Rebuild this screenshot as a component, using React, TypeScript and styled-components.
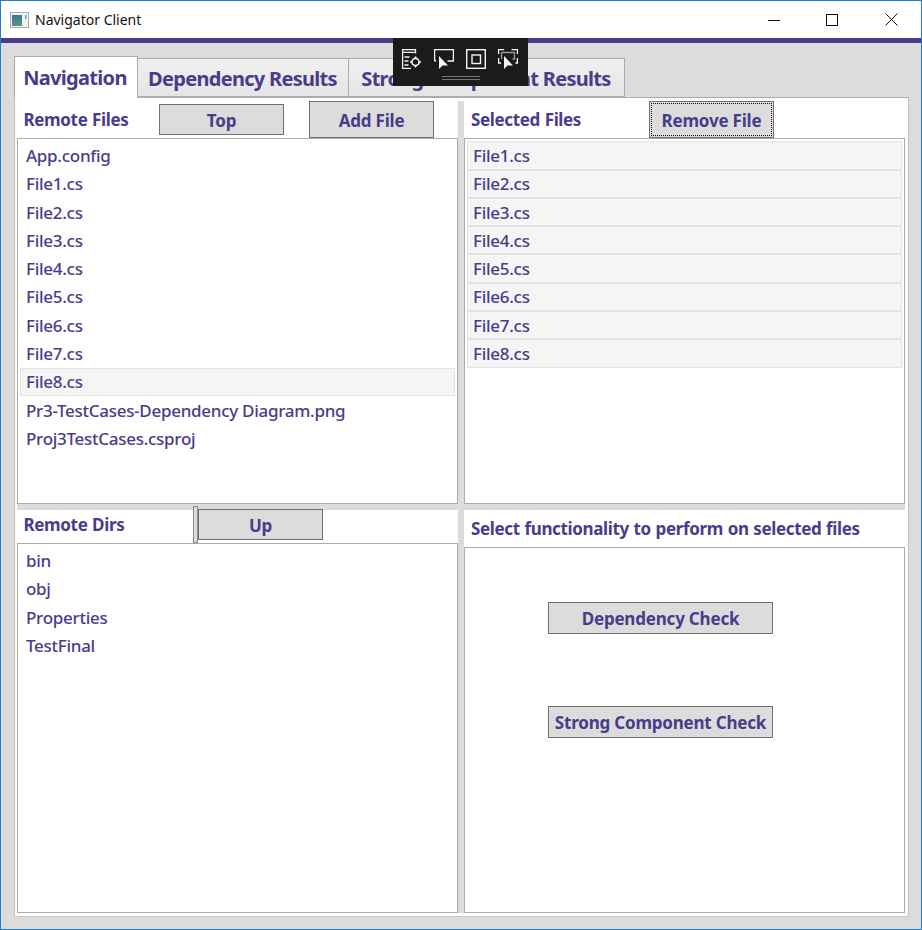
import React from "react";
import styled, { createGlobalStyle } from "styled-components";

const Global = createGlobalStyle`
  html, body { margin: 0; padding: 0; background: #fff; }
  * { box-sizing: border-box; }
`;
const INK = "#483d8b";
const FONT = `"Noto Sans", "Open Sans", "Liberation Sans", sans-serif`;

const Win = styled.div`
  width: 922px; height: 930px; display: flex; flex-direction: column;
  border: 1px solid #1a7fd0; font-family: ${FONT}; position: relative; overflow: hidden;
`;
const TitleBar = styled.div`
  height: 37px; flex: none; display: flex; align-items: center; background: #fff; padding-left: 9px;
`;
const TitleText = styled.div`
  font-family: ${FONT}; font-size: 14px; color: #111; margin-left: 5px; flex: 1; letter-spacing: 0;
`;
const Caption = styled.button<{ $w: number }>`
  width: ${(p) => p.$w}px; height: 37px; border: 0; background: none; padding: 0; display: flex; align-items: center; justify-content: center;
`;
const Accent = styled.div`height: 5px; flex: none; background: ${INK};`;
const Body = styled.div`
  flex: 1; background: #dcdcdc; padding: 13px 12px 12px 13px; display: flex; flex-direction: column;
`;
const TabStrip = styled.div`
  display: flex; align-items: flex-end; height: 41px; flex: none; position: relative; z-index: 1;
`;
const Tab = styled.div<{ $active?: boolean; $w: number }>`
  width: ${(p) => p.$w}px; height: ${(p) => (p.$active ? 42 : 39)}px;
  margin-bottom: ${(p) => (p.$active ? -1 : 0)}px;
  background: ${(p) => (p.$active ? "#fff" : "linear-gradient(#f0f0f0, #e5e5e5)")};
  border: 1px solid #acacac; border-bottom: ${(p) => (p.$active ? "0" : "1px solid #acacac")};
  margin-left: ${(p) => (p.$active ? 0 : -1)}px;
  padding-top: ${(p) => (p.$active ? 0 : 2)}px;
  padding-right: ${(p) => (p.$active ? 2 : 1)}px;
  color: ${INK}; font-weight: 700; font-size: 20px; display: flex; align-items: center; justify-content: center;
  white-space: nowrap; letter-spacing: -0.7px;
`;
const Panel = styled.div`
  flex: 1; border: 1px solid #acacac; border-left-color: #c0c0c0; border-right-color: #c0c0c0; border-bottom-color: #c8c8c8;
  background: #fff; padding: 1px 3px 3px 2px; display: grid;
  grid-template-columns: 441px 6px 441px; grid-template-rows: 405px 6px 1fr; min-height: 0;
`;
const Pane = styled.div`display: flex; flex-direction: column; min-height: 0;`;
const Head = styled.div<{ $h: number; $pt?: number; $pb?: number }>`
  height: ${(p) => p.$h}px; flex: none; display: flex; align-items: center; position: relative;
  padding-top: ${(p) => p.$pt ?? 0}px; padding-bottom: ${(p) => p.$pb ?? 0}px;
`;
const Label = styled.div<{ $w: number; $pl?: number }>`
  width: ${(p) => p.$w}px; flex: none; padding-left: ${(p) => p.$pl ?? 7}px; color: ${INK}; font-weight: 700; font-size: 17px; white-space: nowrap;
  letter-spacing: -0.35px; word-spacing: 0.6px;
`;
const Btn = styled.button<{ $w?: number; $h?: number; $focus?: boolean; $ml?: number; $pt?: number }>`
  width: ${(p) => p.$w ?? 125}px; height: ${(p) => p.$h ?? 31}px; flex: none; margin-left: ${(p) => p.$ml ?? 0}px;
  background: #dcdcdc; border: 1px solid #707070; color: ${INK}; font-family: ${FONT}; font-weight: 700; font-size: 17px;
  letter-spacing: -0.2px; padding: ${(p) => p.$pt ?? 2}px 0 0; position: relative;
  ${(p) => (p.$focus ? `outline: 1px dotted #111; outline-offset: -3px;` : "")}
`;
const List = styled.div`
  flex: 1; border: 1px solid #acacac; background: #fff; padding: 2.3px 2px 2px; min-height: 0;
`;
const Item = styled.div<{ $sel?: boolean }>`
  height: 28.3px; padding-left: 6px; display: flex; align-items: center; font-size: 17px; color: ${INK}; font-weight: 500;
  letter-spacing: -0.28px; white-space: nowrap;
  ${(p) => (p.$sel ? `background: #f5f5f5; border: 1px solid #e3e3e3; padding-left: 5px;` : "")}
`;
const Splitter = styled.div<{ $mt?: number }>`background: #dcdcdc; margin-top: ${(p) => p.$mt ?? 0}px;`;
const HSplit = styled.div`background: #dcdcdc; grid-column: 1 / 4;`;
const Grip = styled.div`
  position: absolute; left: 176px; top: -4px; width: 5px; height: 37px; background: #dcdcdc; border: 1px solid #8c8c8c;
`;
const ActionArea = styled.div`
  flex: 1; border: 1px solid #acacac; background: #fff; display: flex; flex-direction: column; align-items: flex-start;
  padding: 54px 0 0 83px; gap: 72px;
`;
const Toolbar = styled.div`
  position: absolute; left: 392px; top: 37px; width: 135px; height: 48px; background: #1b1b1b; z-index: 5;
  display: flex; align-items: flex-start; gap: 12px; padding: 11px 0 0 9px;
`;
const ToolIcon = styled.svg`width: 20px; height: 20px; flex: none; fill: none; stroke: #f4f4f4; stroke-width: 1.3; overflow: visible;`;
const Handle = styled.div`
  position: absolute; left: 49px; top: 38px; width: 38px; height: 4px; border-top: 1px solid #777; border-bottom: 1px solid #777;
`;

const remote = ["App.config","File1.cs","File2.cs","File3.cs","File4.cs","File5.cs","File6.cs","File7.cs","File8.cs","Pr3-TestCases-Dependency Diagram.png","Proj3TestCases.csproj"];
const selected = ["File1.cs","File2.cs","File3.cs","File4.cs","File5.cs","File6.cs","File7.cs","File8.cs"];
const dirs = ["bin","obj","Properties","TestFinal"];

const AppIcon = () => (
  <svg width="20" height="16" viewBox="0 0 20 16">
    <defs>
      <linearGradient id="ai" x1="0" y1="0" x2="0" y2="1">
        <stop offset="0" stopColor="#3f7396" />
        <stop offset="1" stopColor="#5a9c72" />
      </linearGradient>
    </defs>
    <rect x="0.5" y="0.5" width="18" height="15" fill="#f2f2f2" stroke="#adadad" />
    <rect x="2" y="3" width="10" height="11" fill="url(#ai)" />
    <rect x="15" y="3" width="1.5" height="4" fill="#7f9aa8" />
  </svg>
);

export default function App() {
  return (
    <Win>
      <Global />
      <TitleBar>
        <AppIcon />
        <TitleText>Navigator Client</TitleText>
        <Caption $w={56} aria-label="min"><svg width="12" height="12"><path d="M0 6.5h12" stroke="#111" /></svg></Caption>
        <Caption $w={60} aria-label="max"><svg width="12" height="12"><rect x=".5" y=".5" width="11" height="11" fill="none" stroke="#111" /></svg></Caption>
        <Caption $w={59} aria-label="close"><svg width="13" height="13"><path d="M.5.5l12 12M12.5.5l-12 12" stroke="#111" /></svg></Caption>
      </TitleBar>
      <Accent />
      <Body>
        <TabStrip>
          <Tab $active $w={124}>Navigation</Tab>
          <Tab $w={212}>Dependency Results</Tab>
          <Tab $w={277}>Strong Component Results</Tab>
        </TabStrip>
        <Panel>
          <Pane>
            <Head $h={39} $pt={2}>
              <Label $w={142} $pl={6.5}>Remote Files</Label>
              <Btn>Top</Btn>
              <Btn $h={37} $ml={25}>Add File</Btn>
            </Head>
            <List>{remote.map((f, i) => <Item key={f} $sel={i === 8}>{f}</Item>)}</List>
          </Pane>
          <Splitter $mt={2} />
          <Pane>
            <Head $h={39} $pt={2}>
              <Label $w={185}>Selected Files</Label>
              <Btn $h={37} $focus>Remove File</Btn>
            </Head>
            <List>{selected.map((f) => <Item key={f} $sel>{f}</Item>)}</List>
          </Pane>
          <HSplit />
          <Pane>
            <Head $h={33} $pb={4}>
              <Label $w={181} $pl={6.5}>Remote Dirs</Label>
              <Grip />
              <Btn $pt={1}>Up</Btn>
            </Head>
            <List>{dirs.map((f) => <Item key={f}>{f}</Item>)}</List>
          </Pane>
          <Splitter />
          <Pane>
            <Head $h={37}>
              <Label $w={430}>Select functionality to perform on selected files</Label>
            </Head>
            <ActionArea>
              <Btn $w={225} $h={32} $pt={0}>Dependency Check</Btn>
              <Btn $w={225} $h={32} $pt={0}>Strong Component Check</Btn>
            </ActionArea>
          </Pane>
        </Panel>
      </Body>
      <Toolbar>
        <ToolIcon viewBox="0 0 20 20">
          <path d="M13.5 4.5V.6H.6v18.8h8.4M.6 3.3h12.9M2.5 8h5M2.5 12h4M2.5 16h4" />
          <circle cx="13.5" cy="13" r="3.6" strokeWidth="1.6" />
          <path d="M13.5 7.5v2M13.5 16.5v2M8 13h2M17 13h2" strokeWidth="1.6" />
        </ToolIcon>
        <ToolIcon viewBox="0 0 20 20">
          <path d="M.6 12V.6h18.8V12H13.5M.6 12h1.5" />
          <path d="M5 7v13l3.5-3.5H14z" fill="#f4f4f4" stroke="none" />
        </ToolIcon>
        <ToolIcon viewBox="0 0 20 20">
          <rect x=".7" y=".7" width="18.6" height="18.6" strokeWidth="1.4" />
          <rect x="6" y="6" width="8.5" height="8.5" strokeWidth="1.4" />
        </ToolIcon>
        <ToolIcon viewBox="0 0 20 20">
          <path d="M3.5 3.5h13V10h-2M3.5 3.5V10" stroke="#999" />
          <path d="M.6 5V.6h5.5M13.5.6h5.9V5M.6 9v5h2.5M19.4 9v5h-2" />
          <path d="M6 7v13l3.5-3.5H15z" fill="#f4f4f4" stroke="none" />
        </ToolIcon>
        <Handle />
      </Toolbar>
    </Win>
  );
}
